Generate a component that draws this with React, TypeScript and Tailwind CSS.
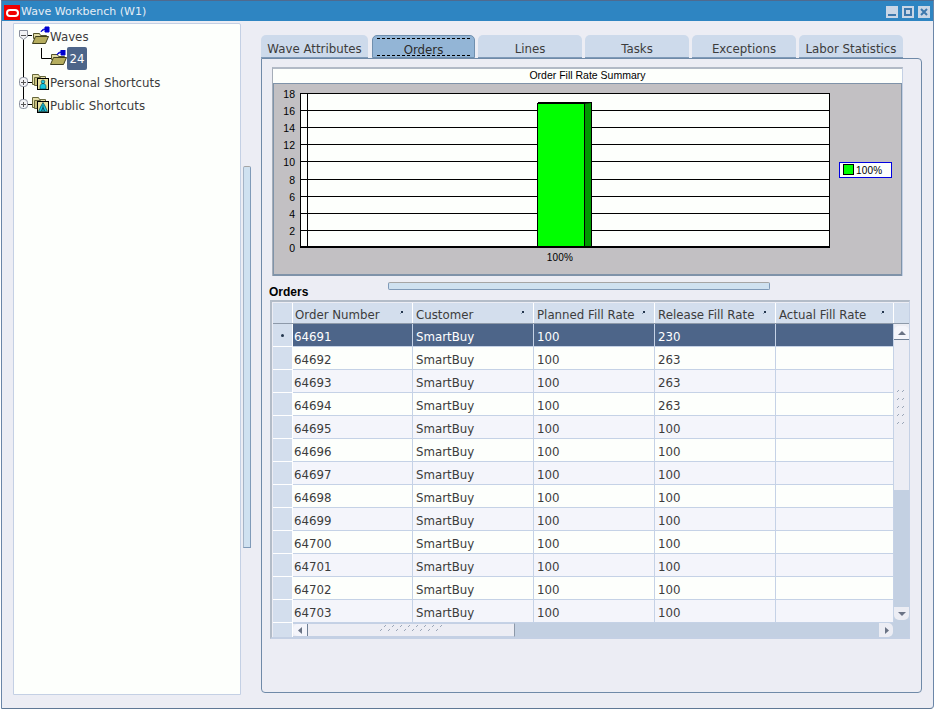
import React from 'react';

const font = { fontFamily: '"DejaVu Sans", sans-serif' };

const tabs = ['Wave Attributes', 'Orders', 'Lines', 'Tasks', 'Exceptions', 'Labor Statistics'];

const columns = [
  { label: 'Order Number', width: 'w-[120px]' },
  { label: 'Customer', width: 'w-[121px]' },
  { label: 'Planned Fill Rate', width: 'w-[121px]' },
  { label: 'Release Fill Rate', width: 'w-[121px]' },
  { label: 'Actual Fill Rate', width: 'w-[118px]' },
];

const orders = [
  ['64691', '230'], ['64692', '263'], ['64693', '263'], ['64694', '263'], ['64695', '100'],
  ['64696', '100'], ['64697', '100'], ['64698', '100'], ['64699', '100'], ['64700', '100'],
  ['64701', '100'], ['64702', '100'], ['64703', '100'],
];

const Folder = ({ x, y }: { x: number; y: number }) => (
  <g transform={`translate(${x} ${y})`}>
    <path d="M1.500 3.500h6l1 2h6v3h-13z" fill="#e0dba6" stroke="#55552a" />
    <path d="M0.500 13.500l3-7h13l-3 7z" fill="#b5ad5e" stroke="#3f3f1c" />
  </g>
);

const Expander = ({ open, y }: { open?: boolean; y: number }) => (
  <g>
    {open ? (
      <path d={`M4.500 ${y - 4.500}h8v6l-4 3-4-3z`} fill="#f2f3f6" stroke="#8a8f9c" />
    ) : (
      <rect x="4.500" y={y - 4.500} width="8" height="9" rx="3" fill="#f2f3f6" stroke="#8a8f9c" />
    )}
    <path d={`M6 ${y + 0.500}h5`} stroke="#555" />
    {!open && <path d={`M8.500 ${y - 2}v5`} stroke="#555" />}
  </g>
);

const BlueArrow = ({ x, y }: { x: number; y: number }) => (
  <path d={`M${x} ${y + 5}c1-3 3-3 5-3M${x + 4} ${y}h4v5h-4z`} fill="#0000d0" stroke="#0000d0" />
);

const TreeRow = ({ kind, label, selected }: { kind: 'root' | 'child' | 'person' | 'group'; label: string; selected?: boolean }) => (
  <div className="flex items-center h-[23px]">
    <svg width="35" height="23" className="shrink-0">
      <g transform="translate(-1 0)">
        {kind === 'root' && (
          <g>
            <path d="M8.500 14v9M13 10.500h4" stroke="#000" fill="none" />
            <Expander open y={10} />
            <Folder x={17} y={5} />
            <BlueArrow x={26} y={2} />
          </g>
        )}
        {kind === 'child' && <path d="M8.500 0v23M26.500 0v10.500h10" stroke="#000" fill="none" />}
        {kind === 'person' && (
          <g>
            <path d="M8.500 0v23M13 11.500h4" stroke="#000" fill="none" />
            <Expander y={11} />
            <path d="M17.500 3.500h6l1 2h6v8h-13z" fill="#e4dfa8" stroke="#66663a" />
            <path d="M19.500 6.500h6l1 2h4v6h-11z" fill="#c9c27f" stroke="#66663a" />
            <rect x="22.500" y="7.500" width="11" height="11" fill="#e8e2a0" stroke="#000" />
            <path d="M28 9a1.800 1.800 0 1 1 0 3.600a1.800 1.800 0 1 1 0-3.600zM25 18v-2.500c0-2 1.500-3 3-3s3 1 3 3V18z" fill="#19c8e0" stroke="#063a46" strokeWidth="0.600" />
          </g>
        )}
        {kind === 'group' && (
          <g>
            <path d="M8.500 0v6M13 10.500h4" stroke="#000" fill="none" />
            <Expander y={10} />
            <path d="M17.500 3.500h6l1 2h6v8h-13z" fill="#e4dfa8" stroke="#66663a" />
            <path d="M19.500 6.500h6l1 2h4v6h-11z" fill="#c9c27f" stroke="#66663a" />
            <rect x="22.500" y="7.500" width="11" height="11" fill="#e8e2a0" stroke="#000" />
            <path d="M28 8.500l2 3.500 2.500 5.500h-9L26 12zM28 11v6.500M26 17.500l2-4 2 4" fill="#19c8e0" stroke="#063a46" strokeWidth="0.700" />
          </g>
        )}
      </g>
    </svg>
    {kind === 'child' ? (
      <div className="flex items-center ml-[-1px]">
        <svg width="17" height="20" className="shrink-0">
          <Folder x={0} y={1} />
          <BlueArrow x={7} y={0} />
        </svg>
        <span className={`flex h-[23px] w-[20px] mb-[2px] pt-[2px] items-center justify-center rounded-[2px] ${selected ? 'bg-[#4d6589] text-white' : ''}`}>{label}</span>
      </div>
    ) : (
      <span className="ml-[-1px] pt-[2px]">{label}</span>
    )}
  </div>
);

const OrderChart = () => {
  const ticks = [18, 16, 14, 12, 10, 8, 6, 4, 2, 0];
  const x0 = 33;
  const x1 = 555;
  const yOf = (i: number) => 9 + i * 17.11;
  return (
    <svg width="627" height="190" className="block" style={{ fontFamily: '"Liberation Sans", sans-serif' }}>
      <rect x="26.500" y="9.500" width={x1 - 26} height="153" fill="#fdfffc" />
      {ticks.map((t, i) => (
        <g key={t}>
          <path d={`M26 ${Math.round(yOf(i)) + 0.500}H${x1}`} stroke="#000" />
          <text x="21" y={Math.round(yOf(i)) + 5} textAnchor="end" fontSize="10.500" fill="#000">{t}</text>
        </g>
      ))}
      <path d={`M${x0 + 0.500} 9v154M26.500 9v154M${x1 + 0.500} 9v154`} stroke="#000" />
      <path d="M26 163H556" stroke="#000" strokeWidth="2" />
      <rect x="263.500" y="19.500" width="47" height="143" fill="#00ff00" stroke="#000" />
      <path d="M310.500 19.500l7-1v144h-7z" fill="#009900" stroke="#000" />
      <path d="M264 18.500h54" stroke="#000" />
      <text x="286" y="177" textAnchor="middle" fontSize="10" letterSpacing="0.200" fill="#000">100%</text>
      <rect x="565.500" y="78.500" width="52" height="15" fill="#fdfffc" stroke="#0000e0" />
      <rect x="569.500" y="80.500" width="10" height="10" fill="#00ff00" stroke="#000" />
      <text x="582" y="89.500" fontSize="10" letterSpacing="0.200" fill="#000">100%</text>
    </svg>
  );
};

const Dots = ({ cols, rows, stepX, stepY, stagger }: { cols: number; rows: number; stepX: number; stepY: number; stagger: number }) => (
  <svg width={cols * stepX + stagger + 2} height={rows * stepY + 2} className="block">
    {Array.from({ length: cols * rows }).map((_, i) => {
      const row = Math.floor(i / cols);
      const cx = (i % cols) * stepX + (row % 2 === 0 ? stagger : 0);
      const cy = row * stepY;
      return <path key={i} d={`M${cx} ${cy + 2}l2-2`} stroke="#9aa6b8" />;
    })}
  </svg>
);

const App = () => (
  <div className="w-[936px] h-[710px] overflow-hidden bg-white text-[11.8px] text-[#3c3c3c]" style={font}>
    <div className="ml-px mr-[2px] h-[709px] flex flex-col border-t border-x border-b border-t-[#4f6a8f] border-x-[#6b86a8] border-b-[#5f7895] rounded-br-[4px] bg-[#ecedf4]">
      {/* title bar */}
      <div className="h-[20px] shrink-0 flex items-center bg-[#2e85c2] text-[#e4edf5] text-[11px]">
        <div className="w-[16px] h-[15px] bg-[#f00000] flex items-center justify-center mt-[3px] ml-[2px]">
          <div className="w-[13px] h-[8px] rounded-[4px] border-2 border-white" />
        </div>
        <span className="ml-px mt-[2px] whitespace-nowrap">Wave Workbench (W1)</span>
        <div className="ml-auto flex gap-[4px] mr-[3px] mt-[2px]">
          <div className="w-[12px] h-[12px] bg-[#c9d6e6] flex items-end justify-center pb-[2px]"><div className="w-[8px] h-[2px] bg-[#3d78ad]" /></div>
          <div className="w-[12px] h-[12px] bg-[#c9d6e6] flex items-center justify-center"><div className="w-[8px] h-[8px] border-2 border-[#3d78ad]" /></div>
          <div className="w-[12px] h-[12px] bg-[#c9d6e6] flex items-center justify-center">
            <svg width="8" height="8"><path d="M1 1l6 6M7 1l-6 6" stroke="#3d78ad" strokeWidth="2" /></svg>
          </div>
        </div>
      </div>

      <div className="flex flex-1 min-h-0">
        {/* tree */}
        <div className="ml-[11px] mt-[2px] w-[228px] h-[672px] shrink-0 bg-[#fdfffc] border border-[#c4d0e4] rounded-tr-[2px] pt-px pl-[2px]">
          <TreeRow kind="root" label="Waves" />
          <TreeRow kind="child" label="24" selected />
          <TreeRow kind="person" label="Personal Shortcuts" />
          <TreeRow kind="group" label="Public Shortcuts" />
        </div>

        {/* vertical splitter */}
        <div className="ml-[2px] mt-[145px] w-[8px] h-[382px] shrink-0 bg-[#cfe1f0] border border-[#7f9ab8] border-t-[#a5a5a5] border-l-[#a5b4c6] rounded-t-[2px]" />

        {/* tab side */}
        <div className="ml-[10px] mt-[14px] w-[661px] shrink-0 flex flex-col">
          <div className="flex gap-[3px] h-[23px]">
            {tabs.map(t => {
              const active = t === 'Orders';
              const wide = t === 'Wave Attributes' ? 'w-[107px] mr-[1px]' : t === 'Orders' ? 'w-[103px]' : 'w-[104px]';
              return (
                <div
                  key={t}
                  className={`${wide} h-[23px] shrink-0 relative flex items-center justify-center pt-[8px] rounded-t-[5px] border-b whitespace-nowrap ${
                    active ? 'bg-[#93b5d6] border-[#6f8fae] border-x border-t text-[#2c2c2c]' : 'bg-[#cddaeb] border-[#7f9ab8]'
                  }`}
                >
                  {active && <div className="absolute left-[4px] right-[4px] top-[2px] bottom-[1px] border-y border-dashed border-black" />}
                  {t}
                </div>
              );
            })}
          </div>
          <div className="w-[661px] h-[635px] border border-[#6f8aa8] rounded-b-[4px] rounded-tr-[4px]">
            <div className="ml-[10px] mt-[8px] w-[631px] border-t-2 border-x border-[#b2bac6] border-r-[#c4d0e4] border-l-[#a5adb8] bg-[#fdfffc]">
              <div className="h-[14px] flex items-center justify-center text-[10.5px] text-black" style={{ fontFamily: '"Liberation Sans", sans-serif' }}>
                Order Fill Rate Summary
              </div>
              <div className="h-[193px] bg-[#c2c0c3] border-t border-x border-b-2 border-[#7f93a9]"><OrderChart /></div>
            </div>

            <div className="ml-[126px] mt-[6px] w-[382px] h-[8px] bg-[#cfe1f0] border border-[#7f9ab8] border-t-[#a5a5a5] rounded-[2px]" />
            <div className="ml-[7px] h-[3px] flex items-center text-[12px] font-bold text-black" style={{ fontFamily: '"Liberation Sans", sans-serif' }}>Orders</div>

            {/* table */}
            <div className="ml-[8px] mt-[7px] w-[640px] h-[339px] border-t-2 border-l-2 border-[#b3bcc8] border-r border-r-[#c4d0e4] border-b-2 border-b-[#c4d0e4] flex bg-[#ecedf4] pl-px pt-px">
              <div className="w-[621px] shrink-0 flex flex-col">
                <div className="flex h-[21px] shrink-0 bg-[#d3deed] border-b border-[#8d99a9]">
                  <div className="w-[20px] border-r border-white" />
                  {columns.map((c, j) => (
                    <div key={c.label} className={`${c.width} shrink-0 flex items-center justify-between pt-[6px] ${j === 0 ? 'pl-[2px]' : 'pl-[3px]'} pr-[8px] border-r border-white whitespace-nowrap overflow-hidden`}>
                      <span>{c.label}</span>
                      <svg width="4" height="4" className="shrink-0 mb-[6px]"><rect x="1" y="0" width="2" height="2" fill="#24364e" /><rect x="0" y="2" width="1" height="1" fill="#8ca0b8" /></svg>
                    </div>
                  ))}
                </div>
                {orders.map((o, i) => {
                  const selected = i === 0;
                  const bg = selected ? 'bg-[#4d6589] text-white' : i % 2 === 0 ? 'bg-[#f4f5fb]' : 'bg-[#fdfffc]';
                  const cells = [o[0], 'SmartBuy', '100', o[1], ''];
                  return (
                    <div key={o[0]} className="flex h-[23px] shrink-0">
                      <div className="w-[20px] shrink-0 bg-[#d3deed] border-r border-b border-white flex items-center justify-center">
                        {selected && <div className="w-[3px] h-[3px] rounded-full bg-[#24364e]" />}
                      </div>
                      {cells.map((cell, j) => (
                        <div key={j} className={`${columns[j].width} shrink-0 ${bg} flex items-center pt-[6px] ${j === 0 ? 'pl-px' : 'pl-[3px]'} border-r border-b border-[#c5d2e6] whitespace-nowrap`}>{cell}</div>
                      ))}
                    </div>
                  );
                })}
                {/* horizontal scrollbar */}
                <div className="flex h-[14px] shrink-0">
                  <div className="w-[20px] shrink-0 bg-[#d3deed] border-r border-white" />
                  <div className="w-[222px] shrink-0 flex items-center bg-[#ecedf4] border-y border-[#c4d0e4] border-r border-r-[#8d99a9]">
                    <div className="w-[15px] h-full flex items-center justify-center border-r border-[#6f7f95] bg-[#f4f5fb] rounded-l-[5px]">
                      <svg width="5" height="7"><path d="M4 0v7L0 3.500z" fill="#6a7385" /></svg>
                    </div>
                    <div className="flex-1 flex justify-center pl-[8px]"><Dots cols={8} rows={2} stepX={8} stepY={4} stagger={4} /></div>
                  </div>
                  <div className="flex-1 bg-[#c3d0e2] flex justify-end pr-px">
                    <div className="w-[14px] h-[14px] flex items-center justify-center bg-[#ecedf4] rounded-r-[5px]">
                      <svg width="5" height="7"><path d="M1 0v7l4-3.500z" fill="#6a7385" /></svg>
                    </div>
                  </div>
                </div>
              </div>
              {/* vertical scrollbar */}
              <div className="w-[15px] shrink-0 flex flex-col">
                <div className="h-[21px] shrink-0 bg-[#d3deed] border-b border-[#8d99a9]" />
                <div className="h-[166px] shrink-0 bg-[#ecedf4] flex flex-col">
                  <div className="h-[14px] shrink-0 flex items-center justify-center bg-[#f4f5fb] border-b border-[#6f7f95] rounded-t-[5px] mt-[2px]">
                    <svg width="8" height="4"><path d="M4 0l4 4H0z" fill="#6a7385" /></svg>
                  </div>
                  <div className="flex justify-center mt-[50px] pl-[3px]"><Dots cols={2} rows={5} stepX={5} stepY={8} stagger={0} /></div>
                </div>
                <div className="flex-1 bg-[#c3d0e2] flex flex-col justify-end pb-[17px]">
                  <div className="h-[13px] flex items-center justify-center bg-[#ecedf4] rounded-b-[5px]">
                    <svg width="8" height="4"><path d="M0 0h8L4 4z" fill="#6a7385" /></svg>
                  </div>
                </div>
              </div>
            </div>
          </div>
        </div>
      </div>
    </div>
  </div>
);

export default App;
